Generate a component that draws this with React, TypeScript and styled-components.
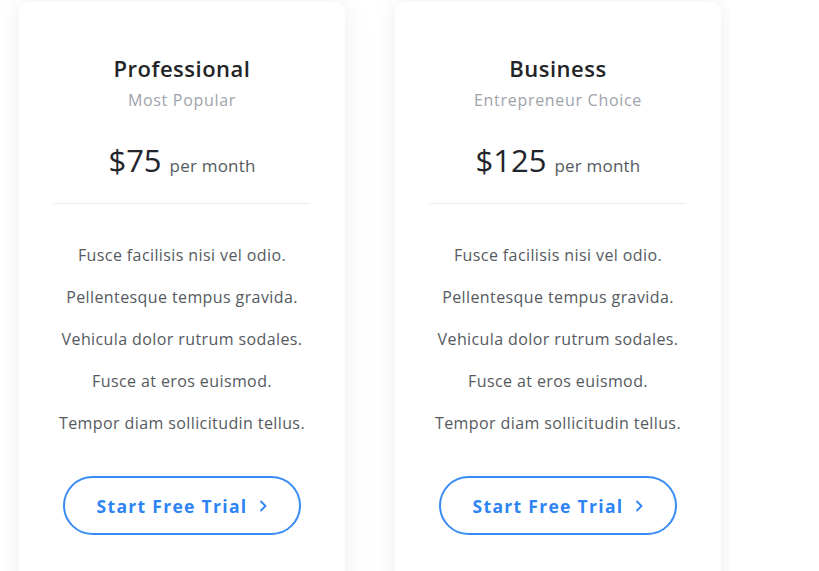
import React from "react";
import styled, { createGlobalStyle } from "styled-components";

const GlobalStyle = createGlobalStyle`
  html, body { margin: 0; padding: 0; background: #ffffff; }
  body { font-family: "Open Sans", "Noto Sans", sans-serif; -webkit-font-smoothing: antialiased; }
  * { box-sizing: border-box; }
`;

const Viewport = styled.div`
  width: 729px;
  height: 571px;
  overflow: hidden;
  padding: 2px 0 0 19px;
  display: flex;
  gap: 50px;
  align-items: flex-start;
`;

const Card = styled.div`
  flex: 0 0 326px;
  height: 640px;
  background: #ffffff;
  border-radius: 10px;
  box-shadow: 0 0 28px rgba(0, 0, 0, 0.07);
  padding-top: 53px;
  display: flex;
  flex-direction: column;
  align-items: center;
`;

const Title = styled.h3`
  margin: 0;
  font-size: 22px;
  line-height: 26px;
  font-weight: 600;
  letter-spacing: 0.5px;
  color: #222428;
`;

const Subtitle = styled.div`
  margin-top: 8px;
  font-size: 16px;
  line-height: 22px;
  letter-spacing: 0.7px;
  color: #9ea3ab;
`;

const PriceRow = styled.div`
  margin-top: 29px;
  display: flex;
  align-items: baseline;
  gap: 8px;
`;

const Amount = styled.span`
  font-size: 31px;
  line-height: 40px;
  font-weight: 500;
  color: #22252b;
`;

const Period = styled.span`
  font-size: 17px;
  letter-spacing: 0.2px;
  color: #555a61;
`;

const Divider = styled.hr`
  width: 256px;
  margin: 23px 0 0;
  border: 0;
  border-top: 1px solid #ececec;
`;

const Features = styled.ul`
  list-style: none;
  margin: 40px 0 0;
  padding: 0;
  display: flex;
  flex-direction: column;
  gap: 20px;
  align-items: center;
`;

const Feature = styled.li`
  font-size: 16px;
  line-height: 22px;
  letter-spacing: 0.4px;
  color: #555a61;
`;

const TrialButton = styled.button`
  margin-top: 42px;
  width: 238px;
  height: 59px;
  border: 2px solid #3a8cf5;
  border-radius: 30px;
  background: #ffffff;
  color: #2e84f4;
  font-family: inherit;
  font-size: 17.5px;
  font-weight: 700;
  letter-spacing: 1.3px;
  display: flex;
  align-items: center;
  justify-content: center;
  gap: 12px;
  cursor: pointer;
  padding: 0;
`;

const Chevron = () => (
  <svg width="8" height="12" viewBox="0 0 8 12" fill="none">
    <path d="M2 1.5 L6.5 6 L2 10.5" stroke="#2e84f4" strokeWidth="1.8" strokeLinecap="round" strokeLinejoin="round" />
  </svg>
);

const features = [
  "Fusce facilisis nisi vel odio.",
  "Pellentesque tempus gravida.",
  "Vehicula dolor rutrum sodales.",
  "Fusce at eros euismod.",
  "Tempor diam sollicitudin tellus.",
];

const plans = [
  { name: "Professional", tag: "Most Popular", price: "$75" },
  { name: "Business", tag: "Entrepreneur Choice", price: "$125" },
];

export default function App() {
  return (
    <>
      <GlobalStyle />
      <Viewport>
        {plans.map((p) => (
          <Card key={p.name}>
            <Title>{p.name}</Title>
            <Subtitle>{p.tag}</Subtitle>
            <PriceRow>
              <Amount>{p.price}</Amount>
              <Period>per month</Period>
            </PriceRow>
            <Divider />
            <Features>
              {features.map((f) => (
                <Feature key={f}>{f}</Feature>
              ))}
            </Features>
            <TrialButton>
              Start Free Trial
              <Chevron />
            </TrialButton>
          </Card>
        ))}
      </Viewport>
    </>
  );
}
